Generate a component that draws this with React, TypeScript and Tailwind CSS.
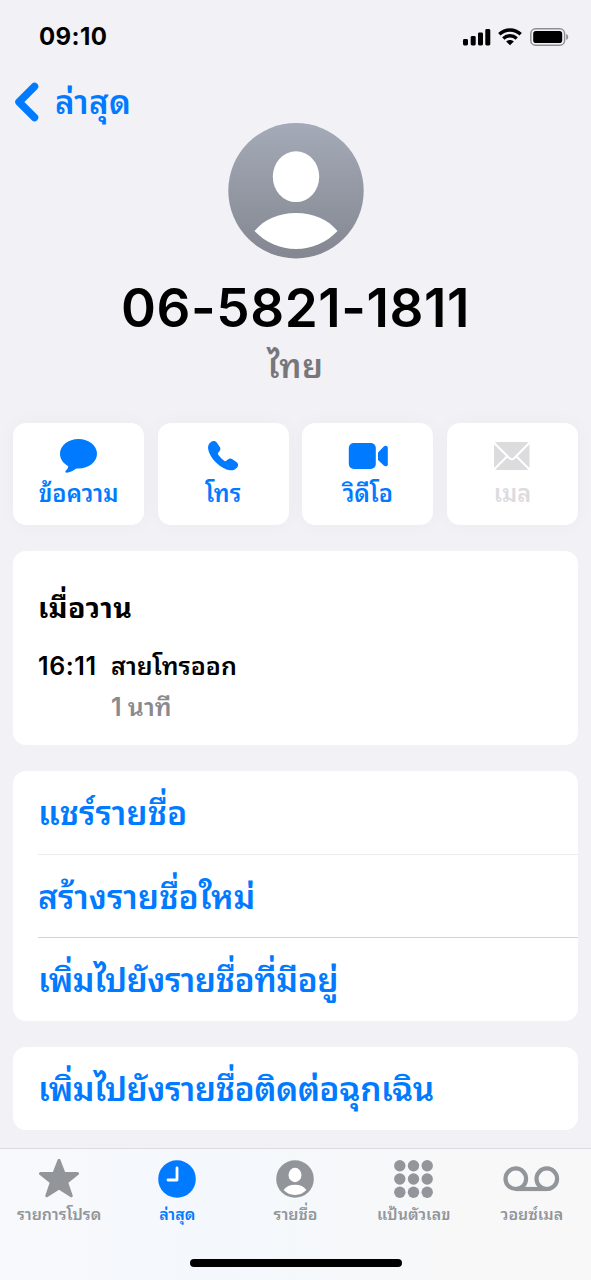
import React from 'react';

type IconProps = { className?: string };

const MessageIcon: React.FC<IconProps> = ({ className }) => (
  <svg className={className} viewBox="0 0 37 34" width="37" height="34" fill="currentColor">
    <path d="M18.500 0C28.700 0 37 6.500 37 14.800S28.700 29.500 18.500 29.500c-1.200 0-2 0-2.600.3-2.400 1.700-5.300 3.500-8.800 3.900-1.700.2-2.300-1.100-1.200-2.100 1.200-1.200 2.200-2.500 2.400-4.400C3.300 24.600 0 20.100 0 14.800 0 6.500 8.300 0 18.500 0z" />
  </svg>
);

const PhoneIcon: React.FC<IconProps> = ({ className }) => (
  <svg className={className} viewBox="0 0 30 30" width="30" height="30" fill="currentColor">
    <path d="M2.400 1.400C4.600-.4 7.400-.4 8.900 1.700l2.700 4c1.100 1.600 1 3.100-.2 4.500l-1 1.200c-.6.700-.6 1.200-.2 2 .8 1.500 4.700 5.500 6.400 6.500.8.400 1.300.3 2-.3l1.300-1.100c1.400-1.200 2.900-1.200 4.500-.2l4 2.700c2.100 1.500 2.200 3.800.5 5.700-1.700 1.900-4 2.900-6.800 2.600-4.600-.5-9.700-3.400-14.100-7.800C3.600 17 .5 12 .1 7.400-.1 4.900.6 2.900 2.400 1.400z" />
  </svg>
);

const VideoIcon: React.FC<IconProps> = ({ className }) => (
  <svg className={className} viewBox="0 0 40 26" width="40" height="26" fill="currentColor">
    <rect x=".8" width="27" height="26" rx="5" />
    <path d="M30 9.500l5.800-6c1.600-1.500 4-.8 4 1.300v16.400c0 2.100-2.400 2.800-4 1.300l-5.800-5.500z" />
  </svg>
);

const MailIcon: React.FC<IconProps> = ({ className }) => (
  <svg className={className} viewBox="0 0 36 28" width="36" height="28">
    <rect width="35.500" height="28" rx="3" fill="currentColor" />
    <path d="M0 .8l15.500 15.400q2.300 2.200 4.600 0L35.500 .8M0 27.500l12.800-12.800M35.500 27.500L22.800 14.700" fill="none" stroke="white" strokeWidth="2" />
  </svg>
);

const StarIcon: React.FC<IconProps> = ({ className }) => (
  <svg className={className} viewBox="0 0 42 40" width="42" height="40" fill="currentColor">
    <path
      d="M21 1.200l5 13 13.500.4-10.900 8.700 4.600 13.500L21 29.100 8.800 36.800l4.600-13.500L2.500 14.600l13.500-.4z"
      stroke="currentColor"
      strokeWidth="3"
      strokeLinejoin="round"
    />
  </svg>
);

const ClockIcon: React.FC<IconProps> = ({ className }) => (
  <svg className={className} viewBox="0 0 38 38" width="38" height="38">
    <circle cx="19" cy="19" r="18.800" fill="currentColor" />
    <path d="M19 8v12H10" fill="none" stroke="white" strokeWidth="2.800" strokeLinecap="round" strokeLinejoin="round" />
  </svg>
);

const ContactIcon: React.FC<IconProps> = ({ className }) => (
  <svg className={className} viewBox="0 0 38 38" width="38" height="38">
    <circle cx="19" cy="19" r="18.800" fill="currentColor" />
    <ellipse cx="19" cy="15" rx="6.500" ry="7.200" fill="white" />
    <path d="M7.600 30C10 26.500 14 24.800 19 24.800S28 26.500 30.400 30C27.500 33.200 23.500 34.900 19 34.900S10.500 33.200 7.600 30z" fill="white" />
  </svg>
);

const KeypadIcon: React.FC<IconProps> = ({ className }) => (
  <svg className={className} viewBox="0 0 40 38" width="40" height="38" fill="currentColor">
    {[5.800, 19.500, 33.200].map(x =>
      [5.800, 19, 32.200].map(y => <circle key={`${x}-${y}`} cx={x} cy={y} r="5.700" />)
    )}
  </svg>
);

const VoicemailIcon: React.FC<IconProps> = ({ className }) => (
  <svg className={className} viewBox="0 0 58 26" width="58" height="26" fill="none" stroke="currentColor" strokeWidth="4.200">
    <circle cx="12.800" cy="12.700" r="10.300" />
    <circle cx="43.800" cy="12.700" r="10.300" />
    <path d="M12.800 23h31" />
  </svg>
);

const StatusBar: React.FC = () => (
  <div className="flex h-[73px] items-center justify-between pl-[39px] pr-[22px]">
    <span className="text-[24px] font-bold leading-[73px] tracking-[0.400px]">09:10</span>
    <div className="flex items-center">
      <svg width="28" height="18" viewBox="0 0 28 18">
        <rect x="0" y="11" width="5" height="6.500" rx="1.400" />
        <rect x="7.700" y="8" width="5" height="9.500" rx="1.400" />
        <rect x="15" y="4.500" width="5" height="13" rx="1.400" />
        <rect x="22.300" y="1" width="5" height="16.500" rx="1.400" />
      </svg>
      <svg className="ml-[7px]" width="24" height="18" viewBox="0 0 24 18" fill="none" stroke="black" strokeWidth="3.400">
        <path d="M1.300 6.300C7.300.6 16.700.6 22.700 6.300" />
        <path d="M5.300 10.400c3.800-3.500 9.600-3.500 13.400 0" />
        <path d="M8.200 13.500c2.200-2 5.400-2 7.600 0L12 17.300z" fill="black" stroke="none" />
      </svg>
      <svg className="ml-[8px]" width="39" height="18" viewBox="0 0 39 18">
        <rect x=".8" y=".8" width="33.800" height="16.400" rx="4.800" fill="none" stroke="#8f8f93" strokeWidth="1.400" />
        <rect x="3.200" y="3" width="29" height="12" rx="2.800" />
        <path d="M36.200 6v6c1.300-.5 2-1.600 2-3s-.7-2.500-2-3z" fill="#8f8f93" />
      </svg>
    </div>
  </div>
);

const Avatar: React.FC = () => (
  <svg className="mx-auto block" width="136" height="136" viewBox="0 0 136 136">
    <defs>
      <linearGradient id="avatar" x1="0" y1="0" x2="0" y2="1">
        <stop offset="0" stopColor="#a4aab7" />
        <stop offset="1" stopColor="#848791" />
      </linearGradient>
    </defs>
    <circle cx="68" cy="67.700" r="67.700" fill="url(#avatar)" />
    <ellipse cx="68" cy="53.700" rx="23.200" ry="25.400" fill="white" />
    <path d="M26.500 108C36 96.500 50.500 90 68 90s32 6.500 41.500 18C98.500 119.500 84 126 68 126s-30.500-6.500-41.500-18z" fill="white" />
  </svg>
);

const actions = [
  { label: 'ข้อความ', icon: <MessageIcon />, disabled: false },
  { label: 'โทร', icon: <PhoneIcon />, disabled: false },
  { label: 'วิดีโอ', icon: <VideoIcon />, disabled: false },
  { label: 'เมล', icon: <MailIcon />, disabled: true },
];

const contactLinks = [
  { label: 'แชร์รายชื่อ', style: 'h-[84px] border-b border-[#ececee]' },
  { label: 'สร้างรายชื่อใหม่', style: 'h-[83px] border-b border-[#d4d4d7]' },
  { label: 'เพิ่มไปยังรายชื่อที่มีอยู่', style: 'h-[83px] tracking-[-0.500px]' },
];

const tabs = [
  { label: 'รายการโปรด', icon: <StarIcon />, active: false },
  { label: 'ล่าสุด', icon: <ClockIcon />, active: true },
  { label: 'รายชื่อ', icon: <ContactIcon />, active: false },
  { label: 'แป้นตัวเลข', icon: <KeypadIcon />, active: false },
  { label: 'วอยซ์เมล', icon: <VoicemailIcon />, active: false },
];

export default function App() {
  return (
    <div className="flex h-[1280px] w-[591px] flex-col overflow-hidden bg-[#f1f1f6] font-['Inter','Noto_Sans_Thai_Looped','Loma','Noto_Sans_Thai','Noto_Sans',sans-serif] text-black">
      <StatusBar />

      <button className="flex h-[50px] items-center pl-[14px] pt-[8px] text-[#007aff]">
        <svg width="26" height="40" viewBox="0 0 26 40" fill="none" stroke="currentColor" strokeWidth="7.500" strokeLinecap="round" strokeLinejoin="round">
          <path d="M20.500 4.500L5 20l15.500 15.500" />
        </svg>
        <span className="ml-[15px] text-[33px] font-semibold leading-[40px] tracking-[0.300px]">ล่าสุด</span>
      </button>

      <Avatar />
      <h1 className="mt-[17px] text-center text-[53px] font-semibold leading-[64px] tracking-[0.600px]">06-5821-1811</h1>
      <p className="text-center text-[33px] font-semibold leading-[52px] tracking-[0.500px] text-[#77777b]">ไทย</p>

      <div className="mx-[13px] mt-[31px] grid h-[102px] shrink-0 grid-cols-4 gap-[13.500px]">
        {actions.map(action => (
          <button
            key={action.label}
            className={`flex flex-col items-center rounded-[13px] bg-white pt-[15px] shadow-[0_0_20px_rgba(0,0,0,0.03)] ${action.disabled ? 'text-[#dcdcde]' : 'text-[#007aff]'}`}
          >
            <span className="flex h-[36px] items-center">{action.icon}</span>
            <span className="text-[23.500px] font-semibold leading-[39px]">{action.label}</span>
          </button>
        ))}
      </div>

      <div className="mx-[13px] mt-[26px] h-[194px] shrink-0 rounded-[13px] bg-white pl-[25px] pt-[37px]">
        <h2 className="text-[28.500px] font-bold leading-[40px] tracking-[0.500px]">เมื่อวาน</h2>
        <div className="mt-[18px] flex text-[25px] font-semibold leading-[41px]">
          <span className="w-[73px] tracking-[0.600px]">16:11</span>
          <div>
            <p>สายโทรออก</p>
            <p className="text-[#8a8a8e]">1 นาที</p>
          </div>
        </div>
      </div>

      <div className="mx-[13px] mt-[26px] h-[250px] shrink-0 rounded-[13px] bg-white pl-[25px] text-[33.500px] font-semibold leading-[84px] text-[#007aff]">
        {contactLinks.map(link => (
          <div key={link.label} className={link.style}>
            {link.label}
          </div>
        ))}
      </div>

      <div className="mx-[13px] mt-[26px] h-[83px] shrink-0 rounded-[13px] bg-white pl-[25px] text-[33.500px] font-semibold leading-[84px] tracking-[-0.500px] text-[#007aff]">
        เพิ่มไปยังรายชื่อติดต่อฉุกเฉิน
      </div>

      <nav className="mt-[18px] flex h-[132px] shrink-0 flex-col items-center border-t border-[#dcdce0] bg-[linear-gradient(90deg,#f8f9fb,#f4f8fd_35%,#f8f8f9_75%)]">
        <div className="grid w-full grid-cols-5">
          {tabs.map(tab => (
            <button
              key={tab.label}
              className={`flex flex-col items-center pt-[10px] ${tab.active ? 'text-[#007aff]' : 'text-[#929599]'}`}
            >
              <span className="flex h-[39px] items-center">{tab.icon}</span>
              <span className="text-[16px] font-semibold leading-[33px]">{tab.label}</span>
            </button>
          ))}
        </div>
        <div className="mt-[28px] h-[8px] w-[212px] rounded-full bg-black" />
      </nav>
    </div>
  );
}
